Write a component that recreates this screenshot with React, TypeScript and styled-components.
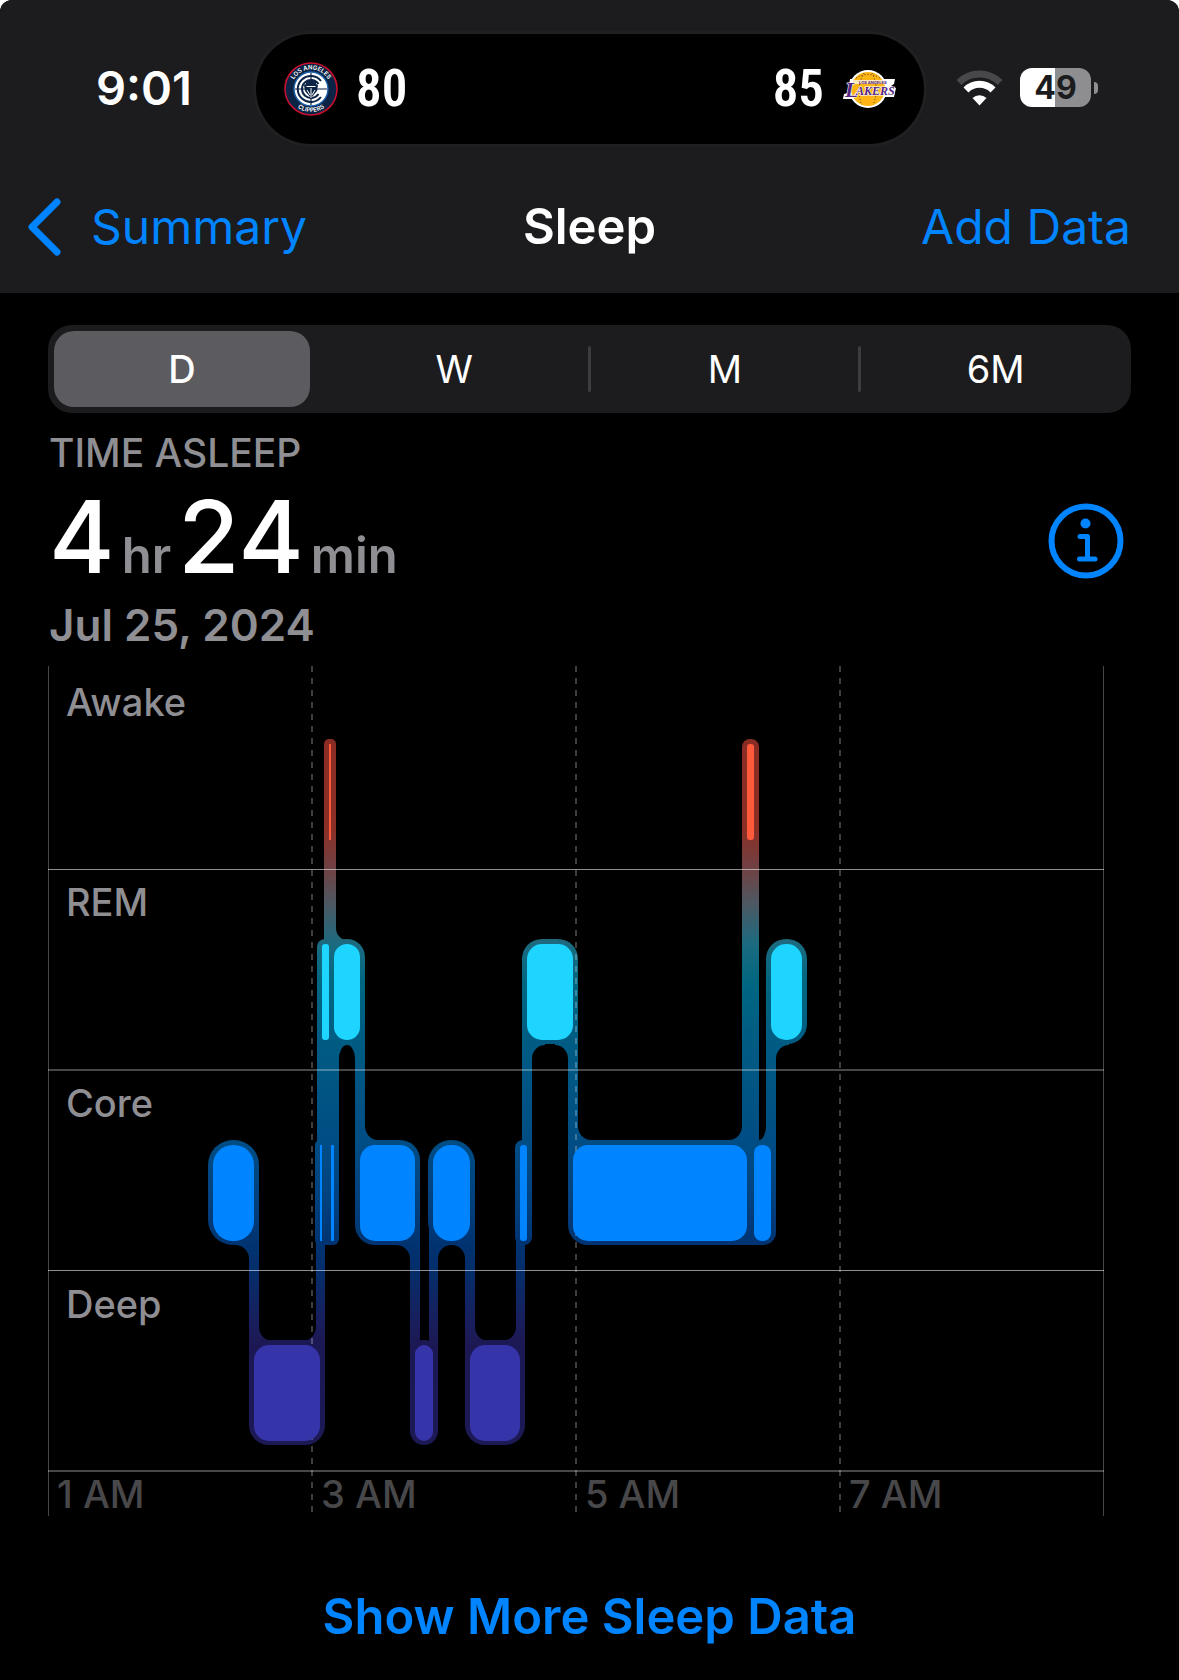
import React, { useState } from "react";
import styled, { createGlobalStyle } from "styled-components";

const blue = "#0084ff";
const grey = "#8e8e93";
const sans = `Inter, "Liberation Sans", sans-serif`;

const GlobalStyle = createGlobalStyle`
  *, *::before, *::after { box-sizing: border-box; }
  html, body { margin: 0; background: #ffffff; }
  body { font-family: ${sans}; color: #ffffff; }
  button, a { font: inherit; color: inherit; text-decoration: none; }
  button { border: 0; padding: 0; margin: 0; background: none; cursor: pointer; }
`;

const Screen = styled.div`
  display: flex;
  flex-direction: column;
  min-height: 100vh;
  background: #000000;
  border-radius: 12px 12px 0 0;
  overflow: hidden;
`;

const Header = styled.header`
  background: #1c1c1e;
`;

const StatusBar = styled.div`
  display: grid;
  grid-template-columns: 256fr 668fr 255fr;
  align-items: center;
  padding: 34px 0 17px;
`;

const Clock = styled.time`
  padding: 0 0 2px 96px;
  font-size: 47px;
  line-height: 56px;
  font-weight: 600;
`;

const Island = styled.div`
  display: flex;
  align-items: center;
  justify-content: space-between;
  height: 110px;
  padding: 0 28px;
  border-radius: 55px;
  background: #000000;
  box-shadow: 0 0 0 3px #202022;
`;

const Team = styled.div`
  display: flex;
  align-items: center;
  gap: 18px;
`;

const Score = styled.span`
  font-family: "Roboto Condensed", "Liberation Sans Narrow", Roboto, sans-serif;
  font-size: 51px;
  line-height: 60px;
  font-weight: 600;
`;

const StatusIcons = styled.div`
  display: flex;
  align-items: center;
  gap: 17px;
  padding: 0 0 3px 32px;
`;

const Battery = styled.div`
  display: flex;
  align-items: center;
  gap: 3px;
`;

const BatteryBody = styled.div<{ $level: number }>`
  width: 71px;
  height: 39px;
  border-radius: 12px;
  background: linear-gradient(to right, #ffffff ${(p) => p.$level}%, #8e8e90 ${(p) => p.$level}%);
  color: #1c1c1e;
  font-size: 32px;
  line-height: 39px;
  font-weight: 700;
  text-align: center;
`;

const BatteryTip = styled.div`
  width: 4px;
  height: 12px;
  border-radius: 0 6px 6px 0;
  background: #8e8e90;
`;

const NavBar = styled.nav`
  display: grid;
  grid-template-columns: 1fr auto 1fr;
  align-items: center;
  height: 132px;
  padding: 0 48px;
  font-size: 48px;
  line-height: 60px;
`;

const BackLink = styled.a`
  display: flex;
  align-items: center;
  gap: 29px;
  margin-left: -21px;
  color: ${blue};
`;

const Title = styled.h1`
  margin: 0;
  font-size: 49px;
  font-weight: 600;
`;

const AddButton = styled.button`
  justify-self: end;
  color: ${blue};
`;

const Main = styled.main`
  display: flex;
  flex-direction: column;
  padding: 32px 48px 33px;
`;

const Segments = styled.div`
  display: grid;
  grid-template-columns: repeat(4, 1fr);
  height: 88px;
  padding: 6px 0;
  border-radius: 24px;
  background: #1c1c1e;
`;

const Segment = styled.button<{ $active: boolean; $divider: boolean }>`
  position: relative;
  margin: 0 ${(p) => (p.$active ? 9 : 0)}px 0 ${(p) => (p.$active ? 6 : 0)}px;
  border-radius: 20px;
  background: ${(p) => (p.$active ? "#5c5b60" : "transparent")};
  font-size: 38px;
  line-height: 48px;
  font-weight: ${(p) => (p.$active ? 500 : 400)};

  &::before {
    content: "";
    display: ${(p) => (p.$divider ? "block" : "none")};
    position: absolute;
    left: -2px;
    top: 15px;
    width: 3px;
    height: 46px;
    border-radius: 2px;
    background: #3d3d41;
  }
`;

const Summary = styled.section`
  display: flex;
  align-items: center;
  justify-content: space-between;
  padding: 16px 7px 13px 1px;
`;

const Caption = styled.h2`
  margin: 0;
  color: ${grey};
  font-size: 39px;
  line-height: 48px;
  font-weight: 500;
`;

const Duration = styled.p`
  display: flex;
  align-items: baseline;
  gap: 7px;
  margin: 0;
`;

const Amount = styled.span`
  font-size: 100px;
  line-height: 120px;
  font-weight: 500;
`;

const Unit = styled.span`
  color: ${grey};
  font-size: 49px;
  line-height: 60px;
  font-weight: 600;
`;

const DateLine = styled.p`
  margin: 0;
  color: ${grey};
  font-size: 44px;
  line-height: 56px;
  font-weight: 600;
`;

const InfoButton = styled.button`
  display: flex;
`;

const Chart = styled.svg`
  display: block;
  width: 100%;
  height: auto;
  font-family: ${sans};
  font-size: 38px;
`;

const MoreButton = styled.button`
  align-self: center;
  margin-top: 71px;
  color: ${blue};
  font-size: 49px;
  line-height: 60px;
  font-weight: 600;
`;

const ClippersLogo = () => (
  <svg width="54" height="54" viewBox="0 0 54 54" role="img" aria-label="Los Angeles Clippers">
    <defs>
      <path id="clip-top" d="M7.500 27a19.500 19.500 0 0 1 39 0" />
      <path id="clip-bottom" d="M4 27a23 23 0 0 0 46 0" />
    </defs>
    <circle cx="27" cy="27" r="26" fill="#0b2344" stroke="#c8102e" strokeWidth="1.600" />
    <circle cx="27" cy="27" r="17" fill="#ffffff" stroke="#1d5fa6" strokeWidth="1.400" />
    <g fill="#ffffff" fontSize="6" fontWeight="600" textAnchor="middle">
      <text><textPath href="#clip-top" startOffset="50%">LOS ANGELES</textPath></text>
      <text><textPath href="#clip-bottom" startOffset="50%">CLIPPERS</textPath></text>
    </g>
    <path d="M37 19a13 13 0 1 0 0 16" fill="none" stroke="#0b2344" strokeWidth="2" />
    <path d="M34.500 22a9 9 0 1 0 0 10" fill="none" stroke="#0b2344" strokeWidth="2" />
    <path d="M11 27h32M27 11v32" stroke="#0b2344" strokeWidth="1.200" />
    <path d="M22 19h10v3l2 1-1 6-6 7-6-7-1-6 2-1z" fill="#0b2344" />
    <path d="M22.500 24.500h9M27 26v10M23 28l3 5M31 28l-3 5" stroke="#ffffff" strokeWidth="1" />
  </svg>
);

const LakersLogo = () => (
  <svg width="54" height="40" viewBox="0 0 54 40" role="img" aria-label="Los Angeles Lakers">
    <circle cx="26" cy="20" r="19" fill="#ffffff" />
    <path d="M8 10h45l-1 5-3 2 5 2-2 9H35l-2 2H1l1-5 4-1z" fill="#ffffff" />
    <circle cx="26" cy="20" r="17" fill="#fdb515" />
    <g fill="none" stroke="#4a3512" strokeWidth="1" strokeDasharray="1 2">
      <path d="M14 9q12-7 24 0M22 4q-9 16-2 32M30 4q8 16 1 32" />
    </g>
    <path d="M9 11h43l-1 4H8z" fill="#ffffff" opacity="0.700" />
    <text x="17" y="15" fill="#552583" fontSize="4" fontWeight="700">LOS ANGELES</text>
    <g fill="#552583" stroke="#ffffff" strokeWidth="1.200" paintOrder="stroke" fontFamily="Liberation Serif, serif" fontStyle="italic" fontWeight="700">
      <text x="3" y="28" fontSize="22">L</text>
      <text x="14" y="26" fontSize="12">AKERS</text>
    </g>
  </svg>
);

const WifiIcon = () => (
  <svg width="47" height="36" viewBox="0 0 47 36" role="img" aria-label="Wi-Fi">
    <path d="M3 12.500a29 29 0 0 1 41 0" fill="none" stroke="#48484a" strokeWidth="7" />
    <path d="M10 20a19 19 0 0 1 27 0" fill="none" stroke="#ffffff" strokeWidth="7" />
    <path d="M23.500 35.500l-7-7.500a10 10 0 0 1 14 0z" fill="#ffffff" />
  </svg>
);

const BackIcon = () => (
  <svg width="35" height="60" viewBox="0 0 35 60" aria-hidden="true">
    <path d="M30 5L5 30l25 25" fill="none" stroke={blue} strokeWidth="7" strokeLinecap="round" strokeLinejoin="round" />
  </svg>
);

const InfoIcon = () => (
  <svg width="76" height="76" viewBox="0 0 76 76" aria-hidden="true">
    <circle cx="38" cy="38" r="34.500" fill="none" stroke={blue} strokeWidth="6" />
    <circle cx="37.500" cy="20.500" r="5" fill={blue} />
    <path d="M32 33.500h7.500V56M31.500 56H47" fill="none" stroke={blue} strokeWidth="5" strokeLinecap="round" strokeLinejoin="round" />
  </svg>
);

type Stage = "awake" | "rem" | "core" | "deep";

const stages: Record<Stage, { label: string; top: number; text: number; color: string }> = {
  awake: { label: "Awake", top: 744, text: 716, color: "#ff5a3c" },
  rem: { label: "REM", top: 944, text: 916, color: "#1dd5ff" },
  core: { label: "Core", top: 1145, text: 1117, color: "#0084ff" },
  deep: { label: "Deep", top: 1345, text: 1318, color: "#3634a9" },
};
const barHeight = 96;

// Stage, start, end, corner radius
const bars: [Stage, number, number, number][] = [
  ["core", 213, 254, 20],
  ["deep", 254, 320, 15],
  ["core", 320, 322, 0],
  ["rem", 322, 329, 3],
  ["awake", 329, 331, 0],
  ["core", 331, 334, 1],
  ["rem", 334, 360, 13],
  ["core", 360, 415, 15],
  ["deep", 415, 433, 9],
  ["core", 433, 470, 18],
  ["deep", 470, 520, 15],
  ["core", 520, 527, 3],
  ["rem", 527, 573, 15],
  ["core", 573, 747, 15],
  ["awake", 747, 754, 3],
  ["core", 754, 771, 8],
  ["rem", 771, 802, 15],
];

// Vertical links between stages: x, width, top, bottom
const links: [number, number, number, number][] = [
  [249, 10, 1193, 1393],
  [316, 9, 1193, 1393],
  [317, 22, 992, 1193],
  [320, 14, 1193, 1245],
  [324, 12, 792, 992],
  [355, 10, 992, 1193],
  [410, 10, 1193, 1393],
  [420, 9, 1341, 1393],
  [429, 9, 1193, 1393],
  [465, 10, 1193, 1393],
  [516, 9, 1193, 1393],
  [522, 10, 992, 1193],
  [568, 10, 992, 1193],
  [742, 17, 792, 1193],
  [730, 34, 1142, 1245],
  [766, 10, 992, 1193],
];

// Inner corner, horizontal and vertical direction, radii
const fillets: [number, number, number, number, number, number][] = [
  [249, 1245, -1, 1, 14, 14],
  [259, 1341, 1, -1, 14, 14],
  [316, 1341, -1, -1, 14, 14],
  [336, 940, 1, -1, 11, 12],
  [339, 1045, 1, 1, 8, 14],
  [355, 1045, -1, 1, 8, 14],
  [365, 1140, 1, -1, 13, 14],
  [410, 1245, -1, 1, 14, 14],
  [438, 1245, 1, 1, 13, 14],
  [465, 1245, -1, 1, 13, 14],
  [475, 1341, 1, -1, 14, 14],
  [516, 1341, -1, -1, 14, 14],
  [532, 1045, 1, 1, 13, 14],
  [568, 1045, -1, 1, 13, 14],
  [578, 1140, 1, -1, 13, 14],
  [742, 1140, -1, -1, 13, 14],
  [766, 1140, -1, -1, 7, 14],
  [776, 1045, 1, 1, 13, 14],
];

const filletPath = ([x, y, dx, dy, rx, ry]: number[]) =>
  `M${x} ${y - dy * 5}H${x + dx * rx}V${y}A${rx} ${ry} 0 0 ${dx * dy > 0 ? 0 : 1} ${x} ${y + dy * ry}Z`;

const shades: [number, string][] = [
  [739, "#8a2c24"],
  [830, "#8a2f26"],
  [869, "#6f4244"],
  [905, "#4b5964"],
  [945, "#1a6b80"],
  [985, "#006681"],
  [1045, "#005b83"],
  [1140, "#004d84"],
  [1190, "#004380"],
  [1245, "#003371"],
  [1275, "#062d69"],
  [1320, "#181f5d"],
  [1345, "#1c1853"],
  [1446, "#1d1955"],
];

const hours: [number, string][] = [
  [48, "1 AM"],
  [312, "3 AM"],
  [576, "5 AM"],
  [840, "7 AM"],
];

const SleepChart = () => (
  <Chart viewBox="48 666 1083 850" role="img" aria-label="Sleep stages by hour">
    <defs>
      <linearGradient id="stage-shade" gradientUnits="userSpaceOnUse" x1="0" y1="739" x2="0" y2="1446">
        {shades.map(([y, c]) => (
          <stop key={y} offset={(y - 739) / 707} stopColor={c} />
        ))}
      </linearGradient>
    </defs>
    <g fill="url(#stage-shade)">
      {bars.map(([s, a, b, r]) => (
        <rect key={a} x={a - 5} y={stages[s].top - 5} width={b - a + 10} height={barHeight + 9} rx={r + 5} />
      ))}
      {links.map(([x, w, y1, y2]) => (
        <rect key={`${x}-${y1}`} x={x} y={y1} width={w} height={y2 - y1} />
      ))}
      {fillets.map((f) => (
        <path key={`${f[0]}-${f[1]}`} d={filletPath(f)} />
      ))}
    </g>
    <g shapeRendering="crispEdges">
      <g fill="#ebebf5" fillOpacity="0.6">
        <rect x="48" y="869" width="1056" height="1" />
        <rect x="48" y="1270" width="1056" height="1" />
      </g>
      <g fill="#ffffff" fillOpacity="0.28">
        <rect x="48" y="1069" width="1056" height="2" />
        <rect x="48" y="1470" width="1056" height="2" />
        <rect x="48" y="666" width="1" height="850" />
        <rect x="1103" y="666" width="1" height="850" />
      </g>
      {hours.slice(1).map(([x]) => (
        <path key={x} d={`M${x} 666V1516`} stroke="#ffffff" strokeOpacity="0.24" strokeWidth="2" strokeDasharray="6 6" />
      ))}
    </g>
    {bars.map(([s, a, b, r]) => (
      <rect key={a} x={a} y={stages[s].top} width={b - a} height={barHeight} rx={r} fill={stages[s].color} />
    ))}
    {Object.values(stages).map((s) => (
      <text key={s.label} x="66" y={s.text} fill={grey} fontWeight="500">{s.label}</text>
    ))}
    {hours.map(([x, label]) => (
      <text key={label} x={x + 9} y="1508" fill="#48484a" fontWeight="500">{label}</text>
    ))}
  </Chart>
);

const ranges = ["D", "W", "M", "6M"];

export default function App() {
  const [range, setRange] = useState(0);
  return (
    <>
      <GlobalStyle />
      <Screen>
        <Header>
          <StatusBar>
            <Clock>9:01</Clock>
            <Island>
              <Team>
                <ClippersLogo />
                <Score>80</Score>
              </Team>
              <Team>
                <Score>85</Score>
                <LakersLogo />
              </Team>
            </Island>
            <StatusIcons>
              <WifiIcon />
              <Battery>
                <BatteryBody $level={49}>49</BatteryBody>
                <BatteryTip />
              </Battery>
            </StatusIcons>
          </StatusBar>
          <NavBar>
            <BackLink href="#summary">
              <BackIcon />
              Summary
            </BackLink>
            <Title>Sleep</Title>
            <AddButton type="button">Add Data</AddButton>
          </NavBar>
        </Header>
        <Main>
          <Segments>
            {ranges.map((label, i) => (
              <Segment
                key={label}
                type="button"
                aria-pressed={range === i}
                $active={range === i}
                $divider={i > 0 && range !== i && range !== i - 1}
                onClick={() => setRange(i)}
              >
                {label}
              </Segment>
            ))}
          </Segments>
          <Summary>
            <div>
              <Caption>TIME ASLEEP</Caption>
              <Duration>
                <Amount>4</Amount>
                <Unit>hr</Unit>
                <Amount>24</Amount>
                <Unit>min</Unit>
              </Duration>
              <DateLine>Jul 25, 2024</DateLine>
            </div>
            <InfoButton type="button" aria-label="About time asleep">
              <InfoIcon />
            </InfoButton>
          </Summary>
          <SleepChart />
          <MoreButton type="button">Show More Sleep Data</MoreButton>
        </Main>
      </Screen>
    </>
  );
}
